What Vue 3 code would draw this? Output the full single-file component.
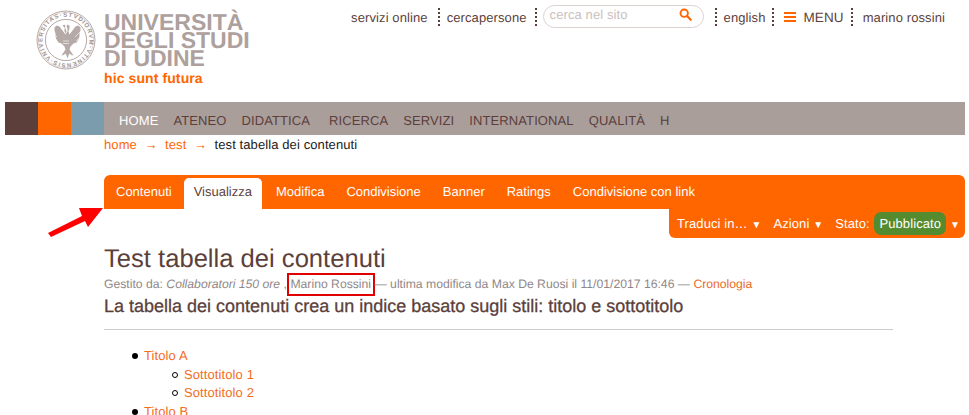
<template>
  <div class="page">
    <header class="top">
      <div class="brand">
        <svg class="seal" viewBox="0 0 60 60" width="60" height="60" aria-hidden="true">
          <defs>
            <path id="ring" d="M30 30 m-23.4 0 a23.4 23.4 0 1 1 46.8 0 a23.4 23.4 0 1 1 -46.8 0" transform="rotate(-50 30 30)" />
          </defs>
          <circle cx="30" cy="30" r="29" fill="none" stroke="#b5aaa7" stroke-width="1" />
          <circle cx="30" cy="30" r="27.6" fill="none" stroke="#c9c0be" stroke-width="0.6" />
          <circle cx="30" cy="30" r="20.6" fill="none" stroke="#ab9f9c" stroke-width="0.9" />
          <text class="ring-text" textLength="145">
            <textPath href="#ring" textLength="145">VNIVERSITAS·STVDIORVM·VTINENSIS·</textPath>
          </text>
          <g fill="#b5aaa7">
            <path d="M26.5 15.5 l2-1 1 2 -1 2 0 3 1.5 2 1.5-2 0-3 -1 -2 1-2 2 1 0 3 -1 3 1 3 3-4 3-4 3-1 2 2 0 3-1 3 0 3-1 3-2 3-3 1-3 3-1 3 2 3 2 3 -2-.5 -2 -1.5 -1 2 -1 3 -1 -3 -1 -2 -2 1.5 -2 .5 2-3 2-3 -1-3 -3-3 -3-1 -2-3 -1-3 0-3 -1-3 0-3 2-2 3 1 3 4 3 4 1-3 -1-3z" />
          </g>
          <g stroke="#fff" stroke-width="0.6" fill="none">
            <path d="M15 21 l6 6 M13 25 l7 6 M15 30 l5 4 M45 21 l-6 6 M47 25 l-7 6 M45 30 l-5 4 M27 31 l6 0 M27 33.5 l6 0" />
          </g>
        </svg>
        <div class="wordmark">
          <div class="wordmark-name">UNIVERSITÀ</div>
          <div class="wordmark-name">DEGLI STUDI</div>
          <div class="wordmark-name">DI UDINE</div>
          <div class="wordmark-motto">hic sunt futura</div>
        </div>
      </div>
      <nav class="tools">
        <a class="tool tool-servizi">servizi online</a>
        <span class="sep"></span>
        <a class="tool tool-cerca">cercapersone</a>
        <span class="sep"></span>
        <div class="search">
          <span class="search-hint">cerca nel sito</span>
          <svg width="13" height="13" viewBox="0 0 14 14" aria-hidden="true">
            <circle cx="5.6" cy="5.6" r="4" fill="none" stroke="#ff6600" stroke-width="2" />
            <path d="M8.6 8.6 L12.6 12.6" stroke="#ff6600" stroke-width="2.4" stroke-linecap="round" />
          </svg>
        </div>
        <span class="sep sep-english"></span>
        <a class="tool tool-english">english</a>
        <span class="sep"></span>
        <span class="burger"><i></i><i></i><i></i></span>
        <a class="tool tool-menu">MENU</a>
        <span class="sep"></span>
        <a class="tool tool-user">marino rossini</a>
      </nav>
    </header>

    <div class="band">
      <span class="swatch swatch-brown"></span>
      <span class="swatch swatch-orange"></span>
      <span class="swatch swatch-blue"></span>
      <nav class="mainnav">
        <a v-for="item in mainItems" :key="item.label" :class="{ current: item.current }">{{ item.label }}</a>
      </nav>
    </div>

    <div class="crumbs">
      <a>home</a><span class="arrow">→</span><a>test</a><span class="arrow">→</span><span class="here">test tabella dei contenuti</span>
    </div>

    <div class="toolbar">
      <div class="tabs">
        <a v-for="tab in tabs" :key="tab" class="tab" :class="{ active: tab === 'Visualizza' }">{{ tab }}</a>
      </div>
      <div class="actions">
        <span class="action">Traduci in… <small>▼</small></span>
        <span class="action">Azioni <small>▼</small></span>
        <span class="action">Stato: <b class="state">Pubblicato</b> <small>▼</small></span>
      </div>
      <svg class="pointer" width="62" height="40" viewBox="0 0 62 40" aria-hidden="true">
        <path d="M2 32 L36 15 L33 7 L57 7 L42 26 L39 20 L5 36 Z" fill="#ff0000" />
      </svg>
    </div>

    <main class="content">
      <h1>Test tabella dei contenuti</h1>
      <p class="byline">
        Gestito da: <em>Collaboratori 150 ore</em> ,<span class="marked">Marino Rossini</span>— ultima modifica da Max De Ruosi il 11/01/2017 16:46 — <a>Cronologia</a>
      </p>
      <p class="lead">La tabella dei contenuti crea un indice basato sugli stili: titolo e sottotitolo</p>
      <hr />
      <ul>
        <li>
          <a>Titolo A</a>
          <ul>
            <li><a>Sottotitolo 1</a></li>
            <li><a>Sottotitolo 2</a></li>
          </ul>
        </li>
        <li><a>Titolo B</a></li>
      </ul>
    </main>
  </div>
</template>

<script setup>
const mainItems = [
  { label: "HOME", current: true },
  { label: "ATENEO" },
  { label: "DIDATTICA" },
  { label: "RICERCA" },
  { label: "SERVIZI" },
  { label: "INTERNATIONAL" },
  { label: "QUALITÀ" },
  { label: "H" },
];

const tabs = ["Contenuti", "Visualizza", "Modifica", "Condivisione", "Banner", "Ratings", "Condivisione con link"];
</script>

<style>
html,
body {
  overflow: hidden;
  background: #fff;
}
</style>

<style scoped>
.page {
  width: 969px;
  height: 415px;
  overflow: hidden;
  font-family: "Liberation Sans", Arial, sans-serif;
  font-size: 13px;
  color: #5c3f3b;
  text-rendering: geometricPrecision;
  letter-spacing: 0.1px;
}

.top {
  height: 102px;
  display: flex;
  justify-content: space-between;
  align-items: flex-start;
}

.brand {
  display: flex;
  padding: 10px 0 0 36px;
  gap: 8px;
}

.ring-text {
  font-size: 6px;
  fill: #9f9390;
  font-weight: bold;
}

.wordmark {
  margin-top: 3px;
}

.wordmark-name {
  font-size: 23px;
  line-height: 18px;
  font-weight: bold;
  color: #ada09d;
  letter-spacing: 0;
}

.wordmark-motto {
  margin-top: 3px;
  font-size: 14px;
  font-weight: bold;
  color: #ff6600;
}

.tools {
  display: flex;
  align-items: center;
  padding: 5px 24px 0 0;
  height: 23px;
}

.tool {
  white-space: nowrap;
  padding-top: 2px;
}

.sep {
  display: block;
  height: 18px;
  width: 0;
  border-left: 2px dotted #5c3f3b;
}

.tool-servizi {
  margin-right: 10px;
}

.tool-cerca {
  margin: 0 8px 0 7px;
}

.search {
  margin-left: 6px;
  width: 161px;
  height: 23px;
  box-sizing: border-box;
  border: 1px solid #dcd3d1;
  border-radius: 12px;
  padding: 0 11px 4px 6px;
  display: flex;
  align-items: center;
  justify-content: space-between;
}

.search-hint {
  color: #c9c0be;
}

.sep-english {
  margin-left: 11px;
}

.tool-english {
  margin: 0 6px 0 7px;
}

.burger {
  margin: 0 8px 0 10px;
  width: 12px;
  display: flex;
  flex-direction: column;
  gap: 2px;
}

.burger i {
  height: 2px;
  background: #ff6600;
}

.tool-menu {
  margin-right: 7px;
  font-size: 13.5px;
}

.tool-user {
  margin-left: 10px;
}

.band {
  margin: 0 4px 0 5px;
  height: 33px;
  background: #aa9e9b;
  display: flex;
}

.swatch {
  width: 33px;
}

.swatch-brown {
  background: #5c3f3b;
}

.swatch-orange {
  background: #ff6600;
}

.swatch-blue {
  background: #7a9cad;
}

.mainnav {
  display: flex;
  gap: 15px;
  padding: 11px 0 0 15px;
}

.mainnav a.current {
  color: #fff;
}

.mainnav a:nth-child(4) {
  margin-left: 4px;
}

.crumbs {
  margin-left: 104px;
  height: 40px;
  line-height: 20px;
  color: #ff6600;
}

.arrow {
  margin: 0 7.5px;
}

.here {
  color: #1a1a1a;
}

.toolbar {
  position: relative;
  margin: 0 4px 0 104px;
}

.tabs {
  height: 34px;
  box-sizing: border-box;
  background: #ff6600;
  border-radius: 6px 6px 0 0;
  padding: 3px 0 0 1px;
  display: flex;
  letter-spacing: 0;
}

.tab {
  padding: 0 11px;
  line-height: 27px;
  color: #fff;
  border-radius: 5px 5px 0 0;
  white-space: nowrap;
}

.tab.active {
  background: #fff;
  color: #5c3f3b;
  padding: 0 10px;
  margin: 0 3px 0 1px;
}

.actions {
  margin-left: auto;
  width: 296px;
  height: 29px;
  box-sizing: border-box;
  background: #ff6600;
  border-radius: 0 0 6px 6px;
  color: #fff;
  display: flex;
  align-items: center;
  gap: 12px;
  padding: 0 0 0 8px;
  white-space: nowrap;
}

.action small {
  font-size: 10px;
}

.state {
  margin-left: 1px;
  font-weight: normal;
  background: #558b2f;
  border-radius: 7px;
  padding: 4px 5px;
}

.pointer {
  position: absolute;
  left: -58px;
  top: 26px;
}

.content {
  margin: 6px 76px 0 104px;
}

h1 {
  margin: 0;
  font-size: 25.6px;
  line-height: 30px;
  font-weight: normal;
  letter-spacing: 0;
}

.byline {
  margin: -1px 0 0;
  font-size: 12.2px;
  line-height: 23px;
  color: #8f8787;
  white-space: nowrap;
  letter-spacing: 0;
}

.byline a {
  color: #e8691f;
}

.marked {
  display: inline-block;
  border: 2px solid #e00000;
  padding: 0 1.5px;
  line-height: 19px;
}

.lead {
  margin: -1px 0 0;
  font-size: 18px;
  line-height: 22px;
  letter-spacing: 0;
  -webkit-text-stroke: 0.3px #5c3f3b;
}

hr {
  margin: 12px 0 0;
  border: 0;
  border-top: 1px solid #ccc;
}

ul {
  margin: 0;
  padding-left: 40px;
  list-style: none;
  color: #000;
}

.content > ul {
  margin-top: 17px;
}

li {
  line-height: 18.7px;
}

li::before {
  content: "";
  display: inline-block;
  box-sizing: border-box;
  width: 6px;
  height: 6px;
  margin: 0 6px 1px -12px;
  border-radius: 50%;
  background: #000;
}

li li::before {
  background: #fff;
  border: 1px solid #000;
}

li a {
  color: #f26d1d;
}
</style>
